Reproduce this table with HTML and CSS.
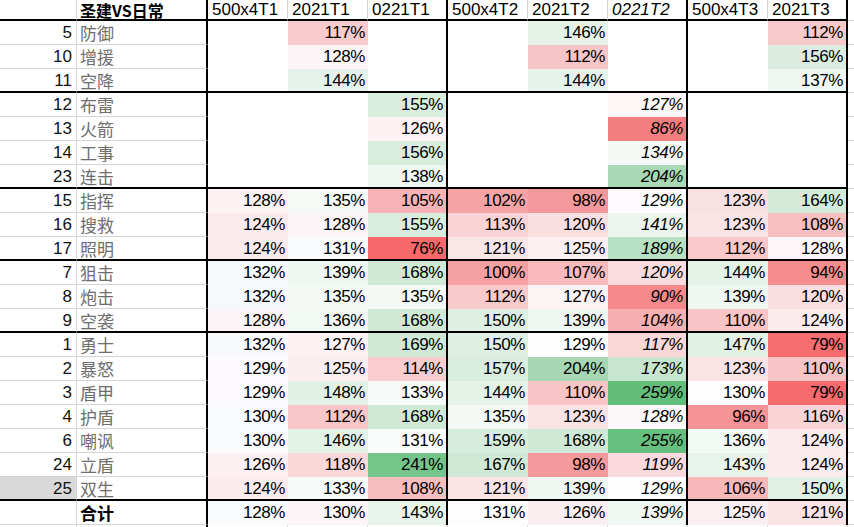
FILE: index.html
```html
<!DOCTYPE html>
<html lang="zh">
<head>
<meta charset="utf-8">
<title>圣建VS日常</title>
<link rel="stylesheet" href="styles.css">
</head>
<body>
<div class="sheet">
  <div class="row head">
    <div class="num"></div><div class="name title">圣建VS日常</div>
    <div class="h">500x4T1</div><div class="h">2021T1</div><div class="h ge">0221T1</div>
    <div class="h">500x4T2</div><div class="h">2021T2</div><div class="h i ge">0221T2</div>
    <div class="h">500x4T3</div><div class="h ge">2021T3</div><div class="fill"></div>
  </div>

  <div class="row">
    <div class="num">5</div><div class="name">防御</div>
    <div class="v"></div><div class="v" style="background:#F8CBCD">117%</div><div class="v ge"></div>
    <div class="v"></div><div class="v" style="background:#E4F2E8">146%</div><div class="v i ge"></div>
    <div class="v"></div><div class="v ge" style="background:#F8C9CB">112%</div><div class="fill"></div>
  </div>
  <div class="row">
    <div class="num">10</div><div class="name">增援</div>
    <div class="v"></div><div class="v" style="background:#FCF5F7">128%</div><div class="v ge"></div>
    <div class="v"></div><div class="v" style="background:#F7C5C8">112%</div><div class="v i ge"></div>
    <div class="v"></div><div class="v ge" style="background:#DAEDE0">156%</div><div class="fill"></div>
  </div>
  <div class="row end">
    <div class="num">11</div><div class="name">空降</div>
    <div class="v"></div><div class="v" style="background:#E6F3EA">144%</div><div class="v ge"></div>
    <div class="v"></div><div class="v" style="background:#E6F3EA">144%</div><div class="v i ge"></div>
    <div class="v"></div><div class="v ge" style="background:#EFF7F2">137%</div><div class="fill"></div>
  </div>

  <div class="row">
    <div class="num">12</div><div class="name">布雷</div>
    <div class="v"></div><div class="v"></div><div class="v ge" style="background:#DAEEE0">155%</div>
    <div class="v"></div><div class="v"></div><div class="v i ge" style="background:#FDF6F7">127%</div>
    <div class="v"></div><div class="v ge"></div><div class="fill"></div>
  </div>
  <div class="row">
    <div class="num">13</div><div class="name">火箭</div>
    <div class="v"></div><div class="v"></div><div class="v ge" style="background:#FCF1F3">126%</div>
    <div class="v"></div><div class="v"></div><div class="v i ge" style="background:#F57E80">86%</div>
    <div class="v"></div><div class="v ge"></div><div class="fill"></div>
  </div>
  <div class="row">
    <div class="num">14</div><div class="name">工事</div>
    <div class="v"></div><div class="v"></div><div class="v ge" style="background:#D9EDDF">156%</div>
    <div class="v"></div><div class="v"></div><div class="v i ge" style="background:#F4F9F6">134%</div>
    <div class="v"></div><div class="v ge"></div><div class="fill"></div>
  </div>
  <div class="row end">
    <div class="num">23</div><div class="name">连击</div>
    <div class="v"></div><div class="v"></div><div class="v ge" style="background:#EFF7F2">138%</div>
    <div class="v"></div><div class="v"></div><div class="v i ge" style="background:#A8D8B4">204%</div>
    <div class="v"></div><div class="v ge"></div><div class="fill"></div>
  </div>

  <div class="row">
    <div class="num">15</div><div class="name">指挥</div>
    <div class="v" style="background:#FCF1F3">128%</div><div class="v" style="background:#F5FAF7">135%</div><div class="v ge" style="background:#F7B3B5">105%</div>
    <div class="v" style="background:#F5A3A5">102%</div><div class="v" style="background:#F4999B">98%</div><div class="v i ge" style="background:#FDFBFD">129%</div>
    <div class="v" style="background:#F9E0E2">123%</div><div class="v ge" style="background:#D4EBDA">164%</div><div class="fill"></div>
  </div>
  <div class="row">
    <div class="num">16</div><div class="name">搜救</div>
    <div class="v" style="background:#FBEBED">124%</div><div class="v" style="background:#FCF5F7">128%</div><div class="v ge" style="background:#D9EDDF">155%</div>
    <div class="v" style="background:#F9D3D5">113%</div><div class="v" style="background:#FADFE1">120%</div><div class="v i ge" style="background:#EBF5EE">141%</div>
    <div class="v" style="background:#FAE3E5">123%</div><div class="v ge" style="background:#F8BFC1">108%</div><div class="fill"></div>
  </div>
  <div class="row end">
    <div class="num">17</div><div class="name">照明</div>
    <div class="v" style="background:#FBEAEC">124%</div><div class="v" style="background:#FAFBFC">131%</div><div class="v ge" style="background:#F8696B">76%</div>
    <div class="v" style="background:#FAE5E7">121%</div><div class="v" style="background:#FBEFF1">125%</div><div class="v i ge" style="background:#B7DFC2">189%</div>
    <div class="v" style="background:#F8C8CA">112%</div><div class="v ge" style="background:#FCF6F8">128%</div><div class="fill"></div>
  </div>

  <div class="row">
    <div class="num">7</div><div class="name">狙击</div>
    <div class="v" style="background:#F6F9FB">132%</div><div class="v" style="background:#EEF6F1">139%</div><div class="v ge" style="background:#D0E9D7">168%</div>
    <div class="v" style="background:#F5A0A2">100%</div><div class="v" style="background:#F8BABC">107%</div><div class="v i ge" style="background:#FADCDE">120%</div>
    <div class="v" style="background:#E4F2E8">144%</div><div class="v ge" style="background:#F58D8F">94%</div><div class="fill"></div>
  </div>
  <div class="row">
    <div class="num">8</div><div class="name">炮击</div>
    <div class="v" style="background:#F6F9FB">132%</div><div class="v" style="background:#F4F9F6">135%</div><div class="v ge" style="background:#F4F9F6">135%</div>
    <div class="v" style="background:#F9CACC">112%</div><div class="v" style="background:#FCF3F5">127%</div><div class="v i ge" style="background:#F5898B">90%</div>
    <div class="v" style="background:#EFF7F2">139%</div><div class="v ge" style="background:#FADEE0">120%</div><div class="fill"></div>
  </div>
  <div class="row end">
    <div class="num">9</div><div class="name">空袭</div>
    <div class="v" style="background:#FCF4F6">128%</div><div class="v" style="background:#F2F8F4">136%</div><div class="v ge" style="background:#D0E9D7">168%</div>
    <div class="v" style="background:#DEEFE3">150%</div><div class="v" style="background:#EFF7F2">139%</div><div class="v i ge" style="background:#F7AFB1">104%</div>
    <div class="v" style="background:#F8C4C6">110%</div><div class="v ge" style="background:#FBEBED">124%</div><div class="fill"></div>
  </div>

  <div class="row">
    <div class="num">1</div><div class="name">勇士</div>
    <div class="v" style="background:#F7F9FB">132%</div><div class="v" style="background:#FCF2F4">127%</div><div class="v ge" style="background:#CFE9D6">169%</div>
    <div class="v" style="background:#DEEFE3">150%</div><div class="v" style="background:#FEFEFE">129%</div><div class="v i ge" style="background:#F9D6D8">117%</div>
    <div class="v" style="background:#E2F1E6">147%</div><div class="v ge" style="background:#F66E70">79%</div><div class="fill"></div>
  </div>
  <div class="row">
    <div class="num">2</div><div class="name">暴怒</div>
    <div class="v" style="background:#FCFAFC">129%</div><div class="v" style="background:#FBEEF0">125%</div><div class="v ge" style="background:#F9CDCF">114%</div>
    <div class="v" style="background:#D8EDDE">157%</div><div class="v" style="background:#A7D7B3">204%</div><div class="v i ge" style="background:#C7E6CF">173%</div>
    <div class="v" style="background:#FAE3E5">123%</div><div class="v ge" style="background:#F8C4C6">110%</div><div class="fill"></div>
  </div>
  <div class="row">
    <div class="num">3</div><div class="name">盾甲</div>
    <div class="v" style="background:#FCFAFC">129%</div><div class="v" style="background:#E1F1E5">148%</div><div class="v ge" style="background:#F6FAF8">133%</div>
    <div class="v" style="background:#E4F2E8">144%</div><div class="v" style="background:#F8C4C6">110%</div><div class="v i ge" style="background:#63BE7B">259%</div>
    <div class="v" style="background:#FDFDFE">130%</div><div class="v ge" style="background:#F66B6D">79%</div><div class="fill"></div>
  </div>
  <div class="row">
    <div class="num">4</div><div class="name">护盾</div>
    <div class="v" style="background:#FAFBFD">130%</div><div class="v" style="background:#F8C6C8">112%</div><div class="v ge" style="background:#D0E9D7">168%</div>
    <div class="v" style="background:#F4F9F6">135%</div><div class="v" style="background:#FAE3E5">123%</div><div class="v i ge" style="background:#FCF8FA">128%</div>
    <div class="v" style="background:#F59496">96%</div><div class="v ge" style="background:#F9D3D5">116%</div><div class="fill"></div>
  </div>
  <div class="row">
    <div class="num">6</div><div class="name">嘲讽</div>
    <div class="v" style="background:#FAFBFD">130%</div><div class="v" style="background:#E3F2E7">146%</div><div class="v ge" style="background:#F9FBFB">131%</div>
    <div class="v" style="background:#D6ECDC">159%</div><div class="v" style="background:#CFE9D6">168%</div><div class="v i ge" style="background:#66BF7E">255%</div>
    <div class="v" style="background:#F3F9F5">136%</div><div class="v ge" style="background:#FBEBED">124%</div><div class="fill"></div>
  </div>
  <div class="row">
    <div class="num">24</div><div class="name">立盾</div>
    <div class="v" style="background:#FCF0F2">126%</div><div class="v" style="background:#F9D8DA">118%</div><div class="v ge" style="background:#75C58A">241%</div>
    <div class="v" style="background:#D0E9D7">167%</div><div class="v" style="background:#F59A9C">98%</div><div class="v i ge" style="background:#FADADC">119%</div>
    <div class="v" style="background:#E8F4EB">143%</div><div class="v ge" style="background:#FBEBED">124%</div><div class="fill"></div>
  </div>
  <div class="row end">
    <div class="num sel">25</div><div class="name">双生</div>
    <div class="v" style="background:#FBEBED">124%</div><div class="v" style="background:#F6FAF8">133%</div><div class="v ge" style="background:#F8BDBF">108%</div>
    <div class="v" style="background:#FAE4E6">121%</div><div class="v" style="background:#EFF7F2">139%</div><div class="v i ge" style="background:#FEFEFE">129%</div>
    <div class="v" style="background:#F7B8BA">106%</div><div class="v ge" style="background:#DFF0E4">150%</div><div class="fill"></div>
  </div>

  <div class="row total">
    <div class="num"></div><div class="name title">合计</div>
    <div class="v" style="background:#FAFBFC">128%</div><div class="v" style="background:#FCF5F7">130%</div><div class="v ge" style="background:#E8F4EB">143%</div>
    <div class="v" style="background:#FDFDFE">131%</div><div class="v" style="background:#FBEEF0">126%</div><div class="v i ge" style="background:#F1F8F3">139%</div>
    <div class="v" style="background:#FCEFF1">125%</div><div class="v ge" style="background:#FAE3E5">121%</div><div class="fill"></div>
  </div>

  <div class="row blank">
    <div class="num"></div><div class="name"></div>
    <div class="b"></div><div class="b"></div><div class="b"></div>
    <div class="b"></div><div class="b"></div><div class="b"></div>
    <div class="b"></div><div class="b"></div><div class="fill"></div>
  </div>
</div>
</body>
</html>
```

FILE: styles.css
```css
html, body {
  margin: 0;
  padding: 0;
  background: #ffffff;
  overflow: hidden;
}

body {
  font-family: "Liberation Sans", Arial, sans-serif;
  color: #000;
}

.sheet {
  width: 854px;
}

.row {
  display: grid;
  grid-template-columns: 77px 131px repeat(8, 80px) 1fr;
  height: 24px;
}

.row > div {
  box-sizing: border-box;
  height: 24px;
  white-space: nowrap;
  overflow: hidden;
}

.num {
  border-right: 1px solid #d4d4d4;
  border-bottom: 1px solid #d4d4d4;
  text-align: right;
  padding-right: 4px;
  font-size: 17px;
  line-height: 23px;
  color: #111;
}

.num.sel {
  background: #d9d9d9;
}

.name {
  border-right: 2px solid #000;
  border-bottom: 1px solid #d4d4d4;
  padding-left: 3px;
  font-family: "Noto Sans CJK SC", sans-serif;
  font-size: 17px;
  line-height: 23px;
  color: #6e6e6e;
}

.name.title {
  color: #000;
  font-weight: bold;
}

.v {
  text-align: right;
  padding-right: 3px;
  font-size: 17px;
  letter-spacing: -0.4px;
  line-height: 24px;
  background: #fff;
}

.i {
  font-style: italic;
}

.ge {
  border-right: 2px solid #000;
}

.fill {
  border-bottom: 1px solid #d4d4d4;
}

.row.end > div:not(.fill) {
  border-bottom: 2px solid #000;
}

.row.end .v {
  line-height: 23px;
}

/* header */
.row.head {
  height: 21px;
}

.row.head > div {
  height: 21px;
}

.row.head > div:not(.fill) {
  border-bottom: 2px solid #000;
}

.row.head .name {
  font-size: 16px;
  line-height: 21px;
  overflow: visible;
}

.h {
  padding-left: 4px;
  font-size: 17px;
  line-height: 19px;
  border-right: 1px solid #d4d4d4;
}

.h.ge {
  border-right: 2px solid #000;
}

/* bottom */
.row.blank .b {
  border-right: 1px solid #d4d4d4;
}
```
